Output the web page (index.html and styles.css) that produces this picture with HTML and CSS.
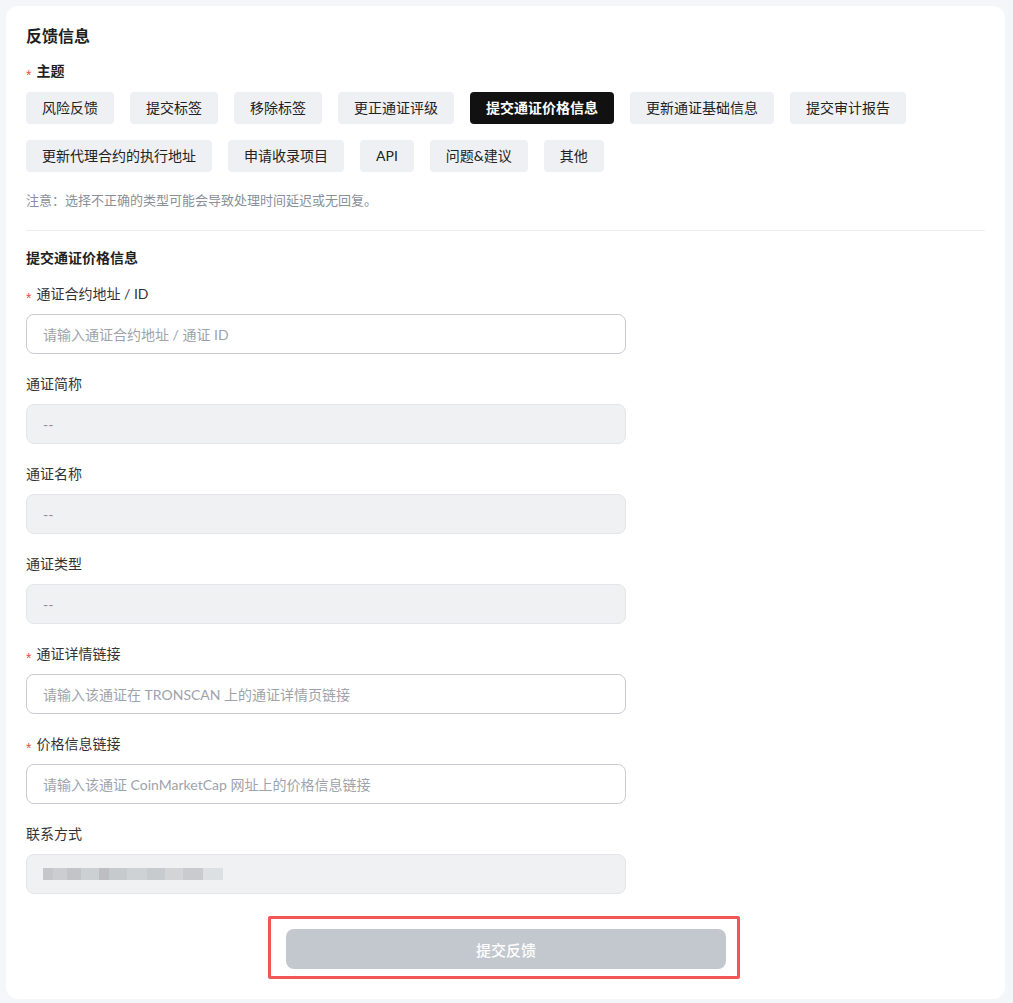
FILE: index.html
```html
<!DOCTYPE html>
<html lang="zh-CN">
<head>
  <meta charset="UTF-8" />
  <meta name="viewport" content="width=device-width, initial-scale=1.0"/>
  <title>反馈信息</title>
  <link rel="stylesheet" href="styles.css">
</head>
<body>
  <div class="card">
    <h2 class="title">反馈信息</h2>

    <div class="label label-bold"><span class="req">*</span>主题</div>
    <div class="tags">
      <button class="tag">风险反馈</button>
      <button class="tag">提交标签</button>
      <button class="tag">移除标签</button>
      <button class="tag">更正通证评级</button>
      <button class="tag active">提交通证价格信息</button>
      <button class="tag">更新通证基础信息</button>
      <button class="tag">提交审计报告</button>
      <button class="tag">更新代理合约的执行地址</button>
      <button class="tag">申请收录项目</button>
      <button class="tag">API</button>
      <button class="tag">问题&amp;建议</button>
      <button class="tag">其他</button>
    </div>
    <p class="note">注意：选择不正确的类型可能会导致处理时间延迟或无回复。</p>

    <hr class="divider" />

    <h3 class="section-title">提交通证价格信息</h3>

    <form class="form">
      <div class="field">
        <label class="label"><span class="req">*</span>通证合约地址 / ID</label>
        <input class="input" type="text" placeholder="请输入通证合约地址 / 通证 ID" />
      </div>
      <div class="field">
        <label class="label">通证简称</label>
        <input class="input" type="text" placeholder="--" disabled />
      </div>
      <div class="field">
        <label class="label">通证名称</label>
        <input class="input" type="text" placeholder="--" disabled />
      </div>
      <div class="field">
        <label class="label">通证类型</label>
        <input class="input" type="text" placeholder="--" disabled />
      </div>
      <div class="field">
        <label class="label"><span class="req">*</span>通证详情链接</label>
        <input class="input" type="text" placeholder="请输入该通证在 TRONSCAN 上的通证详情页链接" />
      </div>
      <div class="field">
        <label class="label"><span class="req">*</span>价格信息链接</label>
        <input class="input" type="text" placeholder="请输入该通证 CoinMarketCap 网址上的价格信息链接" />
      </div>
      <div class="field">
        <label class="label">联系方式</label>
        <div class="input input-disabled">
          <span class="masked"></span>
        </div>
      </div>

      <div class="submit-row">
        <div class="highlight">
          <button class="submit" type="button" disabled>提交反馈</button>
        </div>
      </div>
    </form>
  </div>
</body>
</html>
```

FILE: styles.css
```css
body {
  background-color: #f5f6fa;
  color: #1f1f1f;
  font-family: Lato, "Noto Sans CJK SC", sans-serif;
  margin: 6px 8px 5px 6px;
  padding: 0;
}

.card {
  background-color: #fff;
  border-radius: 12px;
  padding: 18px 20px 20px;
}

.title {
  font-size: 16px;
  line-height: 24px;
  font-weight: 700;
  margin: 0 0 12px;
}

.label {
  display: block;
  height: 20px;
  font-size: 14px;
  line-height: 20px;
  color: #333;
}

.label-bold {
  height: 22px;
  font-weight: 700;
  line-height: 22px;
  color: #1f1f1f;
}

.req {
  display: inline-block;
  color: #d9583b;
  font-family: "Liberation Sans", sans-serif;
  font-size: 14px;
  font-weight: 400;
  line-height: 1;
  margin-right: 5px;
  vertical-align: -4px;
}

.tags {
  display: flex;
  flex-wrap: wrap;
  gap: 16px;
  margin-top: 10px;
}

.tag {
  height: 32px;
  padding: 0 16px 2px;
  border: none;
  border-radius: 4px;
  background-color: #eef0f3;
  color: #222;
  font-family: inherit;
  font-size: 14px;
  cursor: pointer;
}

.tag.active {
  background-color: #111;
  color: #fff;
  font-weight: 700;
}

.note {
  font-size: 13px;
  line-height: 20px;
  color: #8a8f99;
  margin: 18px 0 20px;
}

.divider {
  border: none;
  border-top: 1px solid #eceef1;
  margin: 0;
}

.section-title {
  font-size: 14px;
  line-height: 20px;
  font-weight: 700;
  margin: 17px 0 16px;
}

.form {
  margin: 0;
}

.field {
  margin-bottom: 20px;
  display: flex;
  flex-direction: column;
  gap: 10px;
}

.input {
  box-sizing: border-box;
  width: 600px;
  height: 40px;
  padding: 0 16px;
  border: 1px solid #c8ccd2;
  border-radius: 8px;
  background-color: #fff;
  font-family: inherit;
  font-size: 14px;
  color: #1f1f1f;
  outline: none;
}

.input::placeholder {
  color: #9ea3ab;
}

.input:disabled,
.input-disabled {
  background-color: #f0f1f3;
  border-color: #e3e5e9;
}

.input:disabled::placeholder {
  color: #8a8f99;
}

.input-disabled {
  display: flex;
  align-items: center;
}

/* pixelated contact value */
.masked {
  display: block;
  width: 180px;
  height: 12px;
  background: linear-gradient(90deg,
    #c4c6c9 0 10px, #cbcdd0 10px 24px, #c2c4c8 24px 38px, #cdd0d2 38px 56px,
    #bcbec1 56px 66px, #c7cacd 66px 84px, #cfd2d4 84px 104px, #c8cbce 104px 122px,
    #d2d4d6 122px 140px, #c9cbcf 140px 160px, #dde0e2 160px 180px);
}

.submit-row {
  display: flex;
  justify-content: center;
  padding-top: 2px;
}

.highlight {
  border: 3px solid #f25656;
  border-radius: 2px;
  padding: 10px 11px 7px 15px;
  margin-right: 3px;
}

.submit {
  width: 440px;
  height: 40px;
  border: none;
  border-radius: 8px;
  background-color: #c3c8cf;
  color: #fff;
  font-family: inherit;
  font-size: 15px;
  font-weight: 500;
}
```
